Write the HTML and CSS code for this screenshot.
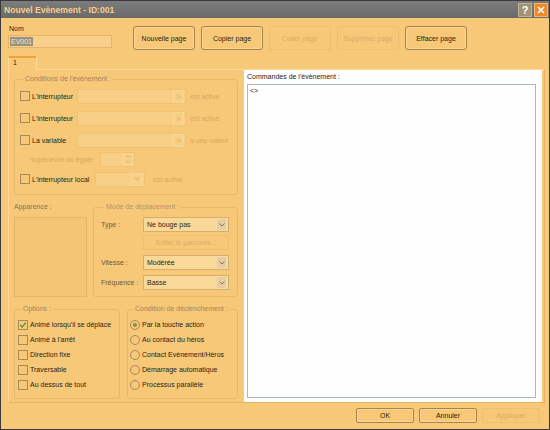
FILE: index.html
```html
<!DOCTYPE html>
<html>
<head>
    <title>Nouvel Evènement</title>
    <link rel="stylesheet" href="styles.css">
</head>
<body>
    <div class="window">
        <div class="titlebar">
            <span class="title">Nouvel Evènement - ID:001</span>
            <div class="title-buttons">
                <span class="tb-btn help">?</span>
                <span class="tb-btn close">
                    <svg width="8" height="8" viewBox="0 0 8 8"><path d="M1 1L7 7M7 1L1 7" stroke="#fff" stroke-width="1.6"/></svg>
                </span>
            </div>
        </div>

        <div class="content">
            <div class="top">
                <div class="name-field">
                    <div class="name-label">Nom</div>
                    <div class="textbox"><span class="selected">EV001</span></div>
                </div>
                <div class="page-buttons">
                    <button class="btn">Nouvelle page</button>
                    <button class="btn">Copier page</button>
                    <button class="btn disabled">Coller page</button>
                    <button class="btn disabled">Supprimer page</button>
                    <button class="btn">Effacer page</button>
                </div>
            </div>

            <div class="tabs">
                <div class="tab">1</div>
            </div>

            <div class="tab-panel">
                <div class="left-col">
                    <!-- Conditions -->
                    <fieldset class="group conditions">
                        <legend>Conditions de l'évènement :</legend>
                        <div class="cond-rows">
                            <div class="cond-row">
                                <div class="check-label"><span class="cb"></span>L'interrupteur</div>
                                <div class="field"><span class="arrow-btn">&gt;</span></div>
                                <span class="after">est activé</span>
                            </div>
                            <div class="cond-row">
                                <div class="check-label"><span class="cb"></span>L'interrupteur</div>
                                <div class="field"><span class="arrow-btn">&gt;</span></div>
                                <span class="after">est activé</span>
                            </div>
                            <div class="cond-row">
                                <div class="check-label"><span class="cb"></span>La variable</div>
                                <div class="field"><span class="arrow-btn">&gt;</span></div>
                                <span class="after">a une valeur</span>
                            </div>
                            <div class="cond-row sub">
                                <span class="sub-label">supérieure ou égale</span>
                                <div class="spin">
                                    <span class="spin-btns">
                                        <svg width="5" height="12" viewBox="0 0 5 12"><path d="M0.5 4L2.5 2L4.5 4M0.5 8L2.5 10L4.5 8" stroke="#e2b064" fill="none"/></svg>
                                    </span>
                                </div>
                            </div>
                            <div class="cond-row">
                                <div class="check-label wide"><span class="cb"></span>L'interrupteur local</div>
                                <div class="field small">
                                    <span class="drop faint">
                                        <svg width="6" height="4" viewBox="0 0 6 4"><path d="M0.5 0.5L3 3L5.5 0.5" stroke="#e0ad60" fill="none"/></svg>
                                    </span>
                                </div>
                                <span class="after far">est activé</span>
                            </div>
                        </div>
                    </fieldset>

                    <!-- Apparence / Mode de déplacement -->
                    <div class="middle-row">
                        <div class="appearance">
                            <div class="group-title">Apparence :</div>
                            <div class="appearance-box"></div>
                        </div>
                        <fieldset class="group mode">
                            <legend>Mode de déplacement :</legend>
                            <div class="mode-rows">
                                <div class="mode-row">
                                    <span class="mode-label">Type :</span>
                                    <div class="combo">Ne bouge pas
                                        <span class="drop"><svg width="6" height="4" viewBox="0 0 6 4"><path d="M0.5 0.5L3 3L5.5 0.5" stroke="#857560" fill="none"/></svg></span>
                                    </div>
                                </div>
                                <div class="mode-row edit">
                                    <span class="mode-label"></span>
                                    <button class="small-btn">Editer le parcours...</button>
                                </div>
                                <div class="mode-row">
                                    <span class="mode-label">Vitesse :</span>
                                    <div class="combo">Modérée
                                        <span class="drop"><svg width="6" height="4" viewBox="0 0 6 4"><path d="M0.5 0.5L3 3L5.5 0.5" stroke="#857560" fill="none"/></svg></span>
                                    </div>
                                </div>
                                <div class="mode-row">
                                    <span class="mode-label">Fréquence :</span>
                                    <div class="combo">Basse
                                        <span class="drop"><svg width="6" height="4" viewBox="0 0 6 4"><path d="M0.5 0.5L3 3L5.5 0.5" stroke="#857560" fill="none"/></svg></span>
                                    </div>
                                </div>
                            </div>
                        </fieldset>
                    </div>

                    <!-- Options / Condition de déclenchement -->
                    <div class="bottom-row">
                        <fieldset class="group options">
                            <legend>Options :</legend>
                            <div class="opt-row"><span class="cb checked"><svg width="8" height="8" viewBox="0 0 8 8"><path d="M1.2 4L3.2 6L6.8 1.6" stroke="#4f9a2a" stroke-width="1.4" fill="none"/></svg></span>Animé lorsqu'il se déplace</div>
                            <div class="opt-row"><span class="cb"></span>Animé à l'arrêt</div>
                            <div class="opt-row"><span class="cb"></span>Direction fixe</div>
                            <div class="opt-row"><span class="cb"></span>Traversable</div>
                            <div class="opt-row"><span class="cb"></span>Au dessus de tout</div>
                        </fieldset>
                        <fieldset class="group trigger">
                            <legend>Condition de déclenchement :</legend>
                            <div class="opt-row"><span class="rb on"></span>Par la touche action</div>
                            <div class="opt-row"><span class="rb"></span>Au contact du héros</div>
                            <div class="opt-row"><span class="rb"></span>Contact Evènement/Héros</div>
                            <div class="opt-row"><span class="rb"></span>Démarrage automatique</div>
                            <div class="opt-row"><span class="rb"></span>Processus parallèle</div>
                        </fieldset>
                    </div>
                </div>

                <div class="commands">
                    <div class="commands-label">Commandes de l'évènement :</div>
                    <div class="command-list">
                        <div>&lt;&gt;</div>
                    </div>
                </div>
            </div>

            <div class="footer">
                <button class="btn footer-btn">OK</button>
                <button class="btn footer-btn">Annuler</button>
                <button class="btn footer-btn disabled">Appliquer</button>
            </div>
        </div>
    </div>
</body>
</html>
```

FILE: styles.css
```css
body {
    margin: 0;
    background-color: #f6c878;
}
.window {
    width: 550px;
    height: 430px;
    box-sizing: border-box;
    border: 1px solid #3a3a3a;
    background-color: #f6c878;
    font-family: "Liberation Sans", Arial, sans-serif;
    font-size: 7px;
    color: #2c2416;
    display: flex;
    flex-direction: column;
}
.titlebar {
    height: 17px;
    flex: none;
    background: linear-gradient(#7c7c7c, #6a6a6a);
    display: flex;
    align-items: center;
    justify-content: space-between;
    padding: 0 1px 0 3px;
}
.title {
    color: #f7cd88;
    font-weight: bold;
    font-size: 8.6px;
}
.title-buttons {
    display: flex;
    gap: 2px;
}
.tb-btn {
    width: 14px;
    height: 14px;
    box-sizing: border-box;
    display: flex;
    align-items: center;
    justify-content: center;
    font-weight: bold;
    font-size: 11px;
    color: #fff;
}
.tb-btn.help {
    background-color: #a39375;
    border: 1px solid #c4b393;
}
.tb-btn.close {
    background-color: #ef8a2b;
    border: 1px solid #f9b46e;
}
.content {
    flex: 1;
    display: flex;
    flex-direction: column;
    padding: 0 4px 0 7px;
}
.top {
    display: flex;
    align-items: flex-start;
    padding-top: 8px;
    height: 24px;
}
.name-field {
    width: 104px;
    margin-top: -3px;
}
.name-label {
    line-height: 11px;
    padding-left: 1px;
}
.textbox {
    margin-top: 1px;
    height: 13px;
    box-sizing: border-box;
    border: 1px solid #e5b46a;
    background-color: #f8d08a;
    padding: 1px;
}
.selected {
    display: inline-block;
    background-color: #9a927e;
    color: #f3e6c8;
    line-height: 9px;
    padding: 0 1px;
}
.page-buttons {
    display: flex;
    gap: 6px;
    margin-left: 21px;
}
.btn {
    width: 62px;
    height: 24px;
    padding: 0;
    border: 1px solid #a8844a;
    border-radius: 3px;
    background-color: #f6c878;
    box-shadow: inset 0 0 0 1px #fad694;
    font: inherit;
    color: #2c2416;
}
.btn.disabled {
    border-color: #efbe6e;
    box-shadow: none;
    color: #dcac62;
}
.tabs {
    margin-top: 6px;
    height: 14px;
    display: flex;
    position: relative;
    z-index: 1;
}
.tab {
    width: 29px;
    box-sizing: border-box;
    border: 1px solid #fbd99b;
    border-top: 2px solid #eea23a;
    border-bottom: none;
    background-color: #f6c878;
    padding: 1px 4px;
    border-radius: 2px 2px 0 0;
}
.tab-panel {
    margin-top: -1px;
    height: 334px;
    box-sizing: border-box;
    border: 1px solid #fbd99b;
    border-right-color: #e4b266;
    border-bottom-color: #e4b266;
    display: grid;
    grid-template-columns: 224px 1fr;
    column-gap: 6px;
    padding: 0 2px 0 5px;
}
.left-col {
    padding-top: 5px;
    display: flex;
    flex-direction: column;
    gap: 8px;
}
.group {
    margin: 0;
    min-width: 0;
    border: 1px solid #e7b86b;
    border-radius: 3px;
}
.group legend {
    padding: 0 2px;
    margin-left: 3px;
    line-height: 8px;
    color: #a18658;
}
.conditions {
    padding: 5px 0 7px 5px;
}
.cond-rows {
    display: flex;
    flex-direction: column;
    gap: 6px;
}
.cond-row {
    display: flex;
    align-items: center;
    height: 16px;
}
.cond-row.sub {
    margin: -3px 0 -2px;
}
.check-label {
    width: 57px;
    display: flex;
    align-items: center;
    gap: 2px;
    flex: none;
}
.check-label.wide {
    width: 75px;
}
.cb {
    width: 10px;
    height: 10px;
    box-sizing: border-box;
    border: 1px solid #a88a58;
    flex: none;
    display: flex;
    align-items: center;
    justify-content: center;
}
.rb {
    width: 10px;
    height: 10px;
    box-sizing: border-box;
    border: 1px solid #a88a58;
    border-radius: 50%;
    flex: none;
    display: flex;
    align-items: center;
    justify-content: center;
}
.rb.on::after {
    content: "";
    width: 4px;
    height: 4px;
    border-radius: 50%;
    background-color: #7c9a34;
}
.field {
    width: 109px;
    height: 15px;
    box-sizing: border-box;
    border: 1px solid #efc274;
    background-color: #f8cf87;
    display: flex;
    justify-content: flex-end;
    align-items: center;
    padding-right: 1px;
}
.field.small {
    width: 50px;
}
.arrow-btn {
    width: 9px;
    height: 11px;
    border: 1px solid #f9d89c;
    color: #e0ad60;
    font-size: 8px;
    line-height: 11px;
    text-align: center;
}
.after {
    margin-left: 4px;
    color: #d9a95f;
}
.after.far {
    margin-left: 8px;
}
.sub-label {
    width: 69px;
    padding-left: 11px;
    color: #d9a95f;
}
.spin {
    width: 35px;
    height: 15px;
    box-sizing: border-box;
    border: 1px solid #efc274;
    background-color: #f8cf87;
    display: flex;
    justify-content: flex-end;
    padding: 1px;
}
.spin-btns {
    width: 8px;
    display: flex;
    align-items: center;
    justify-content: center;
    border: 1px solid #f9d89c;
}
.middle-row {
    display: flex;
    gap: 6px;
    height: 94px;
}
.appearance {
    width: 73px;
    display: flex;
    flex-direction: column;
}
.group-title {
    line-height: 8px;
    color: #8a7350;
}
.appearance-box {
    flex: 1;
    margin-top: 6px;
    border: 1px solid #e6b668;
    background-color: #f3c575;
}
.mode {
    flex: 1;
    padding: 6px 0 5px 7px;
}
.mode legend {
    color: #b3976a;
}
.mode-rows {
    display: flex;
    flex-direction: column;
    gap: 5px;
}
.mode-row {
    display: flex;
    align-items: center;
    height: 15px;
}
.mode-row.edit {
    margin-top: -2px;
}
.mode-label {
    width: 42px;
    flex: none;
    color: #6e5a3a;
}
.combo {
    width: 86px;
    height: 15px;
    box-sizing: border-box;
    border: 1px solid #d6ae6c;
    background-color: #fad898;
    display: flex;
    align-items: center;
    justify-content: space-between;
    padding-left: 3px;
}
.drop {
    width: 9px;
    height: 11px;
    margin-right: 1px;
    border: 1px solid #f2dcae;
    background-color: #e9cd9a;
    display: flex;
    align-items: center;
    justify-content: center;
}
.drop.faint {
    border-color: #f9d89c;
    background-color: transparent;
}
.small-btn {
    width: 86px;
    height: 15px;
    padding: 0;
    border: 1px solid #efbe6e;
    border-radius: 2px;
    background-color: #f6c878;
    font: inherit;
    color: #dcac62;
}
.bottom-row {
    display: flex;
    gap: 7px;
    height: 94px;
}
.options {
    flex: 0 0 106px;
    box-sizing: border-box;
    padding: 4px 0 0 3px;
}
.trigger {
    flex: 1;
    padding: 4px 0 0 2px;
}
.opt-row {
    display: flex;
    align-items: center;
    gap: 2px;
    height: 15px;
}
.commands {
    background-color: #fefefe;
    padding: 2px 6px 4px 3px;
    display: flex;
    flex-direction: column;
}
.commands-label {
    line-height: 10px;
}
.command-list {
    flex: 1;
    margin-top: 2px;
    border: 1px solid #a9b8c9;
    padding: 2px 2px;
}
.footer {
    display: flex;
    justify-content: flex-end;
    gap: 5px;
    margin-top: 5px;
    padding-right: 5px;
}
.footer-btn {
    width: 58px;
    height: 15px;
    border-radius: 2px;
}
```
